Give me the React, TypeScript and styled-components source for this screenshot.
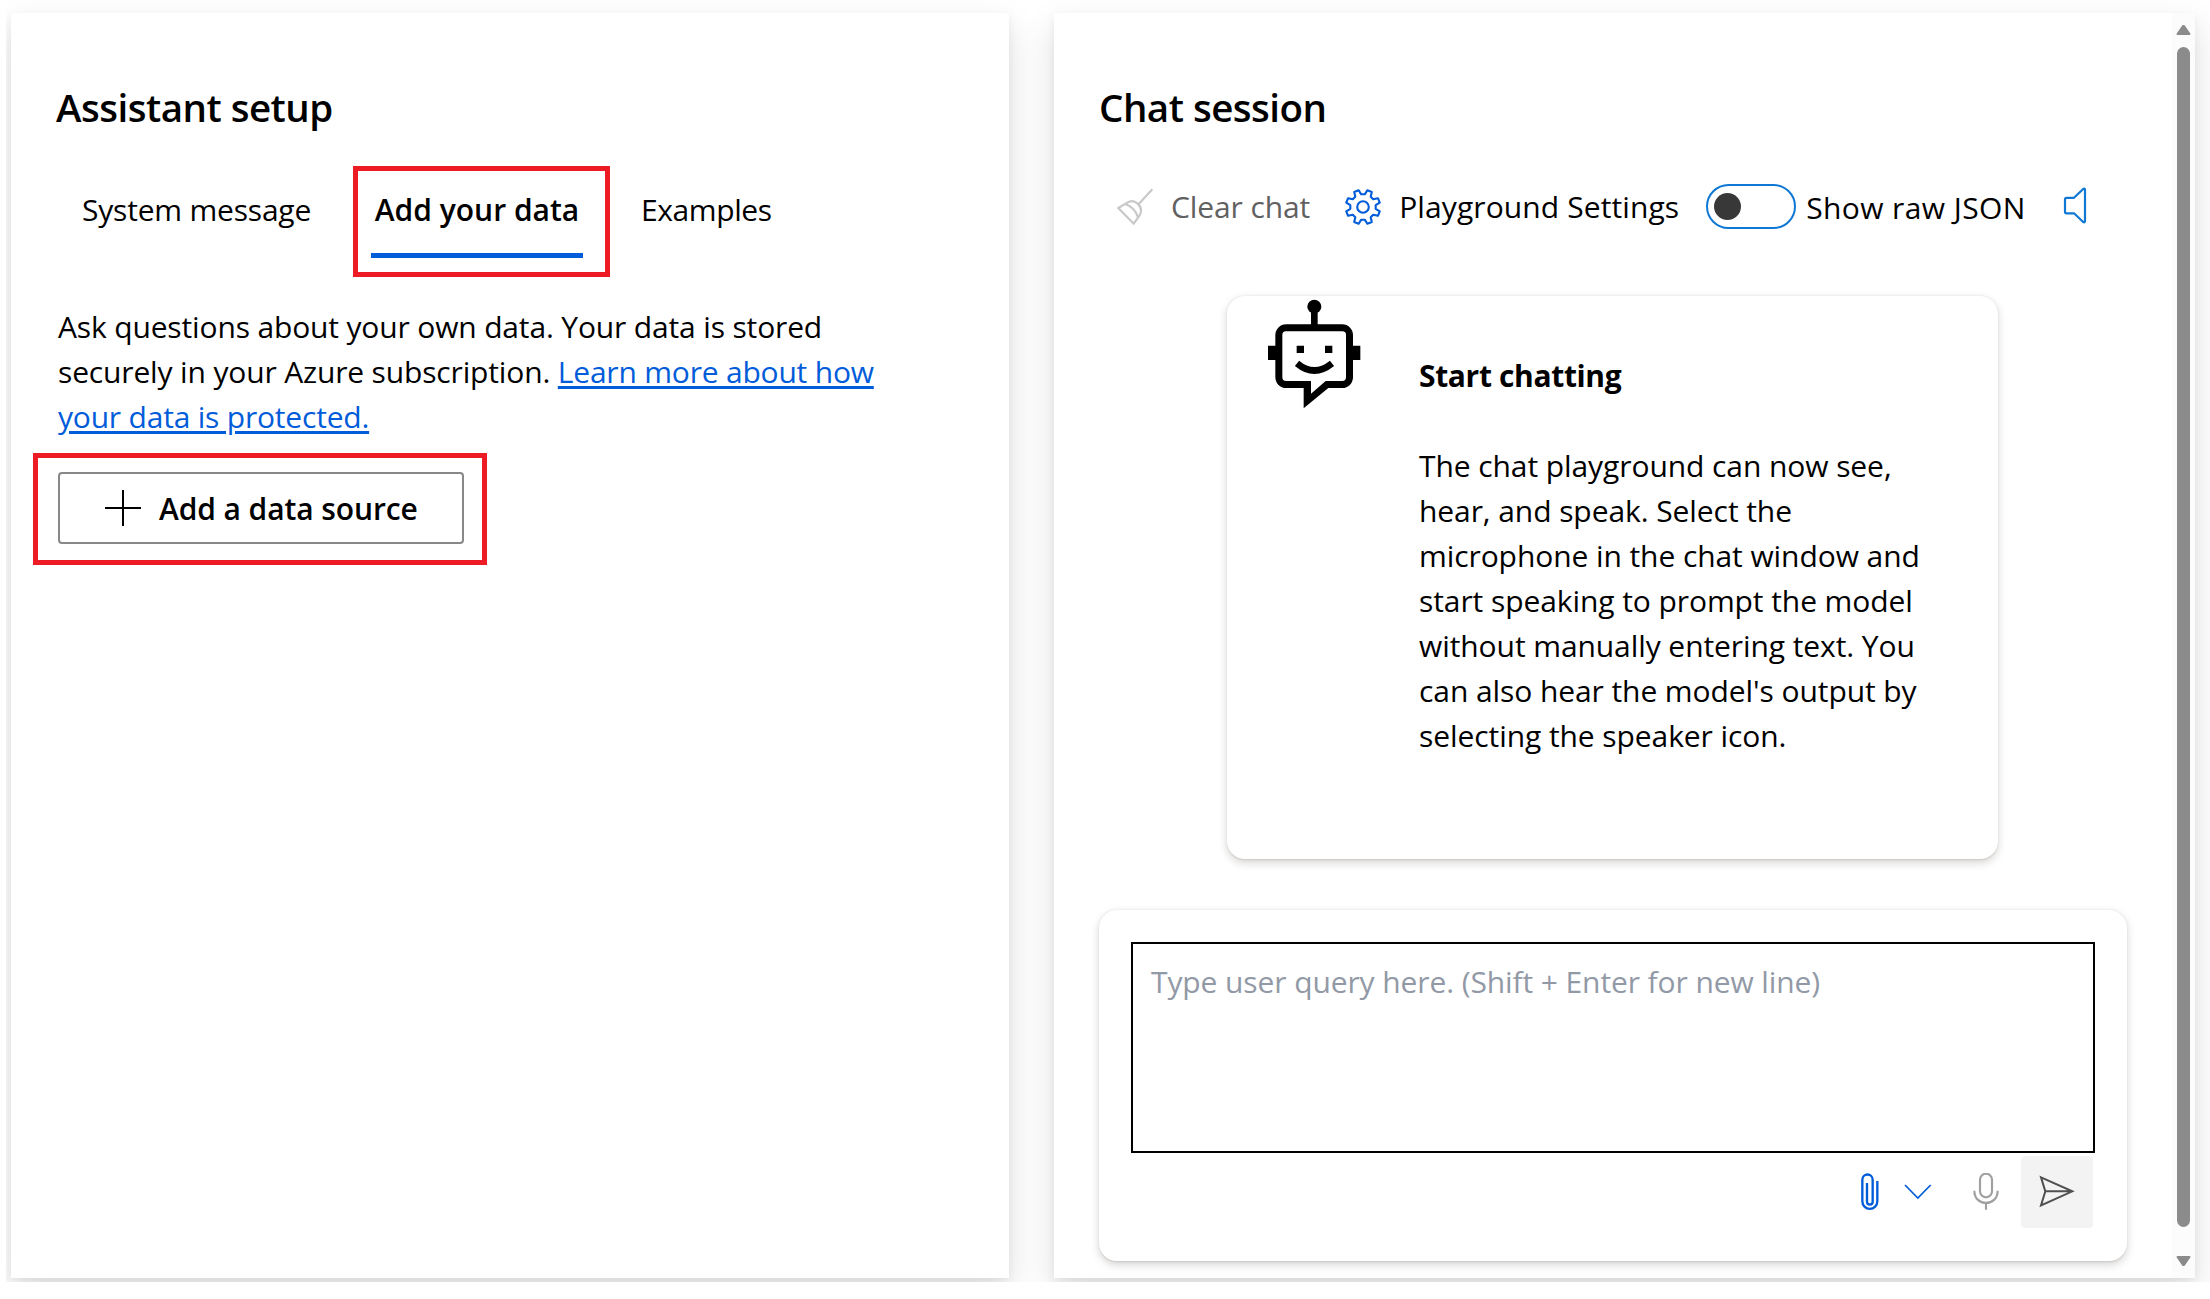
import React from 'react';
import styled, { createGlobalStyle } from 'styled-components';

const BLUE = '#015cda';

const GlobalStyle = createGlobalStyle`
  * { box-sizing: border-box; }
  body {
    margin: 0;
    background: #fff;
    color: #000;
    font-family: "Open Sans", "Noto Sans", sans-serif;
    font-size: 30px;
    line-height: 45px;
  }
`;

const Page = styled.main`
  display: flex;
  gap: 45px;
  width: 2204px;
  height: 1282px;
  margin-left: 6px;
  padding: 13px 0 0 5px;
  overflow: hidden;
`;

const Panel = styled.section<{ $width: number }>`
  display: flex;
  flex: none;
  width: ${(p) => p.$width}px;
  height: 1265px;
  background: #fff;
  box-shadow: 0 14.4px 32.4px rgba(0, 0, 0, 0.132), 0 2.7px 8.1px rgba(0, 0, 0, 0.06);
`;

const PanelBody = styled.div`
  flex: 1;
  min-width: 0;
  padding: 69px 45px 0;
`;

const Title = styled.h2`
  margin: 0;
  font-size: 38.5px;
  font-weight: 600;
  line-height: 50px;
  letter-spacing: -0.5px;
`;

const Highlight = styled.span<{ $inset: string }>`
  position: absolute;
  inset: ${(p) => p.$inset};
  border: 5px solid #ed1c24;
  pointer-events: none;
`;

const TabList = styled.div`
  display: flex;
  gap: 48px;
  margin: 55px 0 46px 17px;
`;

const Tab = styled.div<{ $width: number; $active?: boolean; $indent?: number; $spacing?: number }>`
  position: relative;
  width: ${(p) => p.$width}px;
  height: 71px;
  padding-left: ${(p) => p.$indent || 0}px;
  border-bottom: 5px solid ${(p) => (p.$active ? BLUE : 'transparent')};
  font-weight: ${(p) => (p.$active ? 600 : 400)};
  text-align: ${(p) => (p.$active ? 'center' : 'left')};
  letter-spacing: ${(p) => p.$spacing || 0}px;
  white-space: nowrap;
`;

const Description = styled.p`
  width: 850px;
  margin: 0 0 33px 2px;
  letter-spacing: -0.15px;
`;

const Link = styled.a`
  color: ${BLUE};
  letter-spacing: -0.2px;
  text-decoration: underline;
  text-decoration-thickness: 3px;
  text-underline-offset: 3px;
`;

const AddButton = styled.div`
  position: relative;
  display: flex;
  align-items: center;
  gap: 18px;
  width: 406px;
  height: 72px;
  margin-left: 2px;
  padding: 0 0 0 45px;
  border: 2px solid #8a8886;
  border-radius: 4px;
  font-weight: 600;
  letter-spacing: -0.1px;
  white-space: nowrap;
`;

const Toolbar = styled.div`
  display: flex;
  align-items: center;
  height: 45px;
  margin-top: 52px;
  padding-left: 18px;
  white-space: nowrap;
`;

const ToolItem = styled.div<{ $gap: number; $after: number; $color?: string; $spacing?: number }>`
  display: flex;
  align-items: center;
  gap: ${(p) => p.$gap}px;
  margin-right: ${(p) => p.$after}px;
  color: ${(p) => p.$color || '#000'};
  letter-spacing: ${(p) => p.$spacing || 0}px;
`;

const SwitchLabel = styled.span`
  padding-top: 2px;
`;

const Switch = styled.span`
  display: flex;
  align-items: center;
  width: 90px;
  height: 45px;
  padding-left: 6px;
  border: 2px solid #0f78d4;
  border-radius: 23px;
`;

const Thumb = styled.span`
  width: 27px;
  height: 27px;
  border-radius: 50%;
  background: #383838;
`;

const Card = styled.div`
  border-radius: 18px;
  background: #fff;
  box-shadow: 0 3.6px 8.1px rgba(30, 20, 0, 0.17), 0 0.7px 2px rgba(0, 0, 0, 0.1);
`;

const WelcomeCard = styled(Card)`
  display: flex;
  align-items: flex-start;
  gap: 58px;
  width: 771px;
  height: 563px;
  margin: 67px 0 51px 128px;
  padding: 3px 0 0 41px;
`;

const WelcomeText = styled.div`
  width: 525px;
  padding-top: 54px;
`;

const WelcomeHeading = styled.h3`
  margin: 0 0 45px;
  font-size: 30px;
  font-weight: 700;
  letter-spacing: -0.35px;
`;

const WelcomeCopy = styled.p`
  margin: 0;
  letter-spacing: -0.08px;
`;

const ComposerCard = styled(Card)`
  height: 351px;
  padding: 32px 32px 0;
`;

const QueryBox = styled.div`
  height: 211px;
  padding: 15px 18px;
  border: 2px solid #000;
  color: #9299a6;
  letter-spacing: -0.1px;
`;

const ComposerActions = styled.div`
  display: flex;
  align-items: center;
  justify-content: flex-end;
  height: 72px;
  margin: 3px 2px 0 0;
`;

const Spacer = styled.span<{ $w: number }>`
  flex: none;
  width: ${(p) => p.$w}px;
`;

const SendButton = styled.span`
  display: flex;
  align-items: center;
  width: 72px;
  height: 72px;
  padding-left: 18px;
  border-radius: 4px;
  background: #f3f3f3;
`;

const ScrollTrack = styled.div`
  display: flex;
  flex-direction: column;
  align-items: center;
  flex: none;
  width: 23px;
  padding: 12px 0 12px;
  background: #fcfcfc;
`;

const ScrollThumb = styled.div`
  width: 13px;
  height: 1180px;
  margin: 12px 0 auto;
  border-radius: 7px;
  background: #8b8b8b;
`;

const Glyph = styled.svg`
  display: block;
  flex: none;
  fill: none;
  stroke: currentColor;
`;

const TintedGlyph = styled(Glyph)<{ $color: string }>`
  color: ${(p) => p.$color};
`;

const PlusIcon = () => (
  <Glyph width="36" height="36" viewBox="0 0 36 36" strokeWidth="2">
    <path d="M18 0V36M0 18H36" />
  </Glyph>
);

const BroomIcon = () => (
  <TintedGlyph $color="#c8c8c8" width="37" height="37" viewBox="51 50 111 111" strokeWidth="6.5">
    <path d="M157 54L117 97M55 110L77 97C89 88 103 88 113 97C124 107 126 119 119 132L101 157ZM76 98C92 104 107 117 113 136" />
  </TintedGlyph>
);

const gearPath = (() => {
  const points: string[] = [];
  const add = (deg: number, r: number) => {
    const a = (deg * Math.PI) / 180;
    points.push(`${(19 + r * Math.sin(a)).toFixed(2)} ${(19 - r * Math.cos(a)).toFixed(2)}`);
  };
  for (let i = 0; i < 8; i++) {
    const base = i * 45;
    add(base - 8, 12.8);
    add(base + 8, 12.8);
    add(base + 14.5, 17.3);
    add(base + 30.5, 17.3);
  }
  return `M${points.join('L')}Z`;
})();

const GearIcon = () => (
  <TintedGlyph $color={BLUE} width="38" height="38" viewBox="0 0 38 38" strokeWidth="2.1" strokeLinejoin="round">
    <path d={gearPath} />
    <circle cx="19" cy="19" r="5.8" />
  </TintedGlyph>
);

const SpeakerIcon = () => (
  <TintedGlyph $color="#0f78d4" width="24" height="40" viewBox="0 0 24 40" strokeWidth="2.2" strokeLinejoin="round">
    <path d="M3.500 10.800H11L20.200 2Q22 1 22 3V33.500Q22 36 20.200 35L11 26.300H3.500Q2 26.300 2 24.800V12.300Q2 10.800 3.500 10.800Z" />
  </TintedGlyph>
);

const BotIcon = () => (
  <Glyph width="93" height="110" viewBox="174 56 279 330" stroke="none">
    <g fill="#000" stroke="none">
      <circle cx="313" cy="79" r="21" />
      <path d="M303 90H323V140H303ZM174 196H200V239H174ZM425 196H451V239H425ZM260 196H282V218H260ZM345 196H367V218H345Z" />
      <path
        fillRule="evenodd"
        d="M228 132H397A32 32 0 0 1 429 164V291A32 32 0 0 1 397 323H355L281 384V323H228A32 32 0 0 1 196 291V164A32 32 0 0 1 228 132ZM228 153A11 11 0 0 0 217 164V291A11 11 0 0 0 228 302H303V340L347 302H397A11 11 0 0 0 408 291V164A11 11 0 0 0 397 153Z"
      />
    </g>
    <path d="M261 249Q313 292 366 249" stroke="#000" strokeWidth="20" />
  </Glyph>
);

const PaperclipIcon = () => (
  <TintedGlyph $color={BLUE} width="18" height="38" viewBox="182 99 54 114" strokeWidth="7">
    <path d="M231 123V184A22.500 22.500 0 0 1 186 184V119A15.500 15.500 0 0 1 217 119V185A8.500 8.500 0 0 1 200 185V129" />
  </TintedGlyph>
);

const ChevronIcon = () => (
  <TintedGlyph $color={BLUE} width="28" height="38" viewBox="312 97 84 114" strokeWidth="5">
    <path d="M315 133L353.500 172L392 133" />
  </TintedGlyph>
);

const MicIcon = () => (
  <TintedGlyph $color="#a0a0a0" width="26" height="38" viewBox="518 96 78 114" strokeWidth="6.5">
    <rect x="539" y="98" width="36" height="71" rx="18" />
    <path d="M522 149C522 198 592 198 592 149M557 186V206" />
  </TintedGlyph>
);

const SendIcon = () => (
  <TintedGlyph $color="#505050" width="36" height="38" viewBox="717 98 108 114" strokeWidth="6">
    <path d="M723 111L817 153L723 195L736 153ZM736 153H817" />
  </TintedGlyph>
);

const ArrowIcon = ({ down }: { down?: boolean }) => (
  <TintedGlyph $color="#8b8b8b" width="15" height="10" viewBox="0 0 15 10" strokeWidth="2" strokeLinejoin="round">
    <path fill="currentColor" d={down ? 'M1.500 1H13.500L8 9H7Z' : 'M1.500 9H13.500L8 1H7Z'} />
  </TintedGlyph>
);

export default function App() {
  return (
    <>
      <GlobalStyle />
      <Page>
        <Panel $width={998}>
          <PanelBody>
            <Title>Assistant setup</Title>
            <TabList>
              <Tab $width={250} $indent={9} $spacing={-0.2}>
                System message
              </Tab>
              <Tab $width={212} $active>
                Add your data
                <Highlight $inset="-21px -27px -24px -18px" />
              </Tab>
              <Tab $width={150} $indent={10} $spacing={-0.4}>
                Examples
              </Tab>
            </TabList>
            <Description>
              Ask questions about your own data. Your data is stored securely in your Azure subscription.{' '}
              <Link>Learn more about how your data is protected.</Link>
            </Description>
            <AddButton>
              <PlusIcon />
              Add a data source
              <Highlight $inset="-21px -25px -23px -27px" />
            </AddButton>
          </PanelBody>
        </Panel>

        <Panel $width={1141}>
          <PanelBody>
            <Title>Chat session</Title>
            <Toolbar>
              <ToolItem $gap={17} $after={34} $color="#616161" $spacing={-0.1}>
                <BroomIcon />
                Clear chat
              </ToolItem>
              <ToolItem $gap={17} $after={27} $spacing={0.1}>
                <GearIcon />
                Playground Settings
              </ToolItem>
              <ToolItem $gap={10} $after={37} $spacing={0.4}>
                <Switch>
                  <Thumb />
                </Switch>
                <SwitchLabel>Show raw JSON</SwitchLabel>
              </ToolItem>
              <SpeakerIcon />
            </Toolbar>
            <WelcomeCard>
              <BotIcon />
              <WelcomeText>
                <WelcomeHeading>Start chatting</WelcomeHeading>
                <WelcomeCopy>
                  The chat playground can now see, hear, and speak. Select the microphone in the chat window and
                  start speaking to prompt the model without manually entering text. You can also hear the model's
                  output by selecting the speaker icon.
                </WelcomeCopy>
              </WelcomeText>
            </WelcomeCard>
            <ComposerCard>
              <QueryBox>Type user query here. (Shift + Enter for new line)</QueryBox>
              <ComposerActions>
                <PaperclipIcon />
                <Spacer $w={25} />
                <ChevronIcon />
                <Spacer $w={41} />
                <MicIcon />
                <Spacer $w={22} />
                <SendButton>
                  <SendIcon />
                </SendButton>
              </ComposerActions>
            </ComposerCard>
          </PanelBody>
          <ScrollTrack>
            <ArrowIcon />
            <ScrollThumb />
            <ArrowIcon down />
          </ScrollTrack>
        </Panel>
      </Page>
    </>
  );
}
